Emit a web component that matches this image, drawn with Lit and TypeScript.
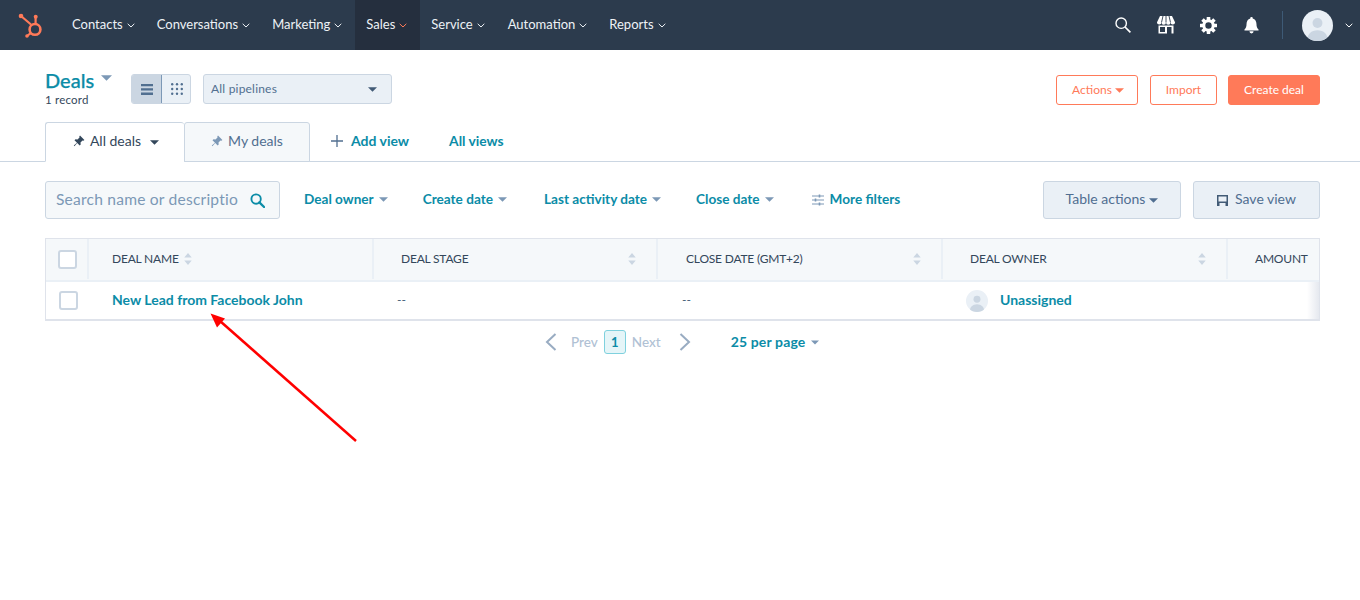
import { LitElement, html, css, svg } from "lit";
import { customElement } from "lit/decorators.js";

const caret = (cls = "") => html`<svg class="caret ${cls}" viewBox="0 0 10 5" width="9" height="5"><path d="M0 0h10L5 5z" fill="currentColor"/></svg>`;
const chev = (cls = "") => html`<svg class="chev ${cls}" viewBox="0 0 8 5" width="8" height="5"><path d="M.7.8 4 4l3.300-3.200" fill="none" stroke="currentColor" stroke-width="1"/></svg>`;
const pin = html`<svg class="pin" viewBox="0 0 12 12" width="12" height="12"><path d="M7 .6l4.400 4.300-1 .8-.9-.2-2 2 .2 2-1 1L4.200 8 1.400 11.200.8 10.600 4 7.800 1.500 5.300l1-1 2 .2 2-2-.2-1z" fill="currentColor"/></svg>`;
const sort = html`<svg class="sort" viewBox="0 0 8 15" width="8" height="14"><path d="M4 1l4 5H0zM4 14l4-5H0z" fill="#cbd6e2"/></svg>`;

const gear = () => {
  const teeth = [0, 45, 90, 135, 180, 225, 270, 315];
  return svg`${teeth.map((a) => svg`<rect x="6.700" y="0" width="3.600" height="4" rx=".4" fill="#fff" transform="rotate(${a} 8.500 8.500)"/>`)}
    <circle cx="8.500" cy="8.500" r="4.700" fill="none" stroke="#fff" stroke-width="3"/>`;
};

@customElement("app-root")
export class AppRoot extends LitElement {
  static styles = css`
    :host { display: block; width: 1360px; height: 600px; position: relative; overflow: hidden; background: #fff; font-family: "Lato", "Noto Sans", sans-serif; color: #33475b; font-size: 14px; --teal: #0b8ca7; }
    svg { display: block; flex: none; }
    .nav { height: 50px; background: #2c3b4d; color: #fff; display: flex; align-items: center; }
    .logo { width: 55px; margin-right: 17px; }
    .nitem { display: flex; align-items: center; height: 100%; gap: 4px; font-size: 13px; color: #eef2f6; padding: 0 11.500px 2px; box-sizing: border-box; }
    .nitem.first { padding-left: 0; padding-right: 10.500px; }
    .nitem.conv { padding-right: 10.500px; }
    .nitem.mkt { padding-right: 12.500px; }
    .nitem.on { background: #252f3e; padding-right: 12.500px; }
    .nitem.auto { padding-right: 10.500px; }
    .nitem.on .chev { color: #ff7a59; }
    .nitem .chev { margin-top: 2px; }
    .nright { margin-left: auto; display: flex; align-items: center; height: 100%; padding-right: 7px; }
    .nright .sep { width: 1px; height: 28px; background: #3e5a76; margin: 0 19px 0 23px; }
    .ic { margin-right: 25px; }
    .ic.g { margin-right: 27px; }
    .avatar { margin-right: 12px; }

    .head { display: flex; align-items: flex-start; height: 72px; padding: 0 40px 0 45px; }
    .title { width: 86px; padding-top: 18px; }
    .deals { display: flex; align-items: center; gap: 7px; color: var(--teal); font-size: 20px; font-weight: 500; line-height: 24px; height: 24px; -webkit-text-stroke: .25px var(--teal); }
    .deals .caret { color: #7c98b6; margin-top: -4px; width: 11px; height: 6px; }
    .rec { font-size: 11.500px; line-height: 14px; margin-top: 1px; letter-spacing: .2px; }
    .toggle { display: flex; width: 60px; height: 30px; margin-top: 24px; border: 1px solid #cbd6e2; border-radius: 3px; box-sizing: border-box; background: #eaf0f6; overflow: hidden; }
    .toggle div { flex: 1; display: flex; align-items: center; justify-content: center; padding-left: 1px; }
    .toggle .act { background: #cbd6e2; border-right: 1px solid #7c98b6; flex: none; width: 30px; box-sizing: border-box; padding-left: 0; }
    .select { width: 189px; height: 30px; margin: 24px 0 0 12px; box-sizing: border-box; background: #eaf0f6; border: 1px solid #cbd6e2; border-radius: 3px; display: flex; align-items: center; justify-content: space-between; padding: 0 14px 2px 7px; font-size: 12px; color: #516f90; letter-spacing: .2px; }
    .select .caret { color: #425b76; margin-top: 2px; }
    .acts { margin-left: auto; display: flex; gap: 12px; margin-top: 25px; }
    .btn { height: 30px; box-sizing: border-box; display: flex; align-items: center; justify-content: center; gap: 3px; border: 1px solid #ff7a59; border-radius: 3px; color: #ff7a59; font-size: 12px; padding-bottom: 2px; }
    .btn .caret { margin-top: 2px; }
    .btn.a { width: 82px; padding-left: 2px; } .btn.i { width: 67px; margin-right: -1px; } .btn.c { width: 92px; background: #ff7a59; color: #fff; }

    .tabs { display: flex; height: 40px; box-sizing: border-box; padding-left: 45px; border-bottom: 1px solid #cbd6e2; }
    .tab { height: 40px; box-sizing: border-box; display: flex; align-items: center; justify-content: center; gap: 5px; border: 1px solid #cbd6e2; border-radius: 3px 3px 0 0; font-size: 14px; padding-bottom: 3px; }
    .tab.one { width: 139px; background: #fff; border-bottom-color: #fff; border-right: 0; padding-left: 2px; }
    .tab.two { width: 126px; background: #f5f8fa; color: #516f90; }
    .tab.two .pin { color: #7c98b6; }
    .tab .caret { margin-left: 4px; margin-top: 3px; }
    .tab .pin { margin-top: 1px; }
    .tlink { color: var(--teal); font-weight: 700; font-size: 14px; display: flex; align-items: center; height: 38px; gap: 8px; padding-bottom: 2px; box-sizing: border-box; }
    .tlink svg { margin-top: 2px; }
    .tlink.add { margin-left: 21px; }
    .tlink.all { margin-left: 40px; font-size: 13.800px; }

    .filters { display: flex; align-items: center; height: 38px; margin-top: 19px; padding: 0 40px 0 45px; }
    .search { width: 235px; height: 38px; box-sizing: border-box; border: 1px solid #cbd6e2; border-radius: 3px; background: #f5f8fa; display: flex; align-items: center; justify-content: space-between; padding: 0 14px 2px 10px; color: #7c98b6; font-size: 15.600px; letter-spacing: .2px; white-space: nowrap; }
    .search svg { margin-top: 2px; }
    .f { display: flex; align-items: center; gap: 5px; color: var(--teal); font-weight: 700; font-size: 13.600px; padding-bottom: 3px; }
    .f .caret { color: #7c98b6; width: 9px; margin-top: 2px; }
    .f svg { margin-top: 2px; }
    .f1 { margin-left: 24px; } .f2, .f4 { margin-left: 35px; } .f3 { margin-left: 37px; } .f5 { margin-left: 38px; gap: 6px; }
    .gbtn { height: 38px; box-sizing: border-box; background: #eaf0f6; border: 1px solid #cbd6e2; border-radius: 3px; display: flex; align-items: center; justify-content: center; gap: 7px; color: #506e91; font-size: 14px; padding-bottom: 3px; }
    .gbtn svg { margin-top: 3px; }
    .gbtn.t { width: 138px; margin-left: auto; gap: 4px; } .gbtn.s { width: 127px; margin-left: 12px; }

    .table { margin: 19px 40px 0 45px; border: 1px solid #dfe3eb; border-bottom-width: 2px; height: 83px; box-sizing: border-box; position: relative; overflow: hidden; }
    .table::after { content: ""; position: absolute; right: 0; top: 43px; bottom: 0; width: 12px; background: linear-gradient(to right, rgba(223,227,235,0), rgba(223,227,235,.8)); }
    .tr { display: grid; grid-template-columns: 43px 285px 284px 285px 285px 1fr; }
    .tr.h { height: 43px; background: #f5f8fa; border-bottom: 2px solid #eaf0f6; box-sizing: border-box; }
    .th { display: flex; align-items: center; justify-content: space-between; padding: 0 20px 0 27px; font-size: 12px; color: #33475b; border-right: 2px solid #eaf0f6; box-sizing: border-box; letter-spacing: -.2px; height: 41px; margin-top: -1px; }
    .th.n1 { justify-content: flex-start; gap: 5px; padding-left: 23px; }
    .th.cd { padding-left: 28px; }
    .th.ck, .td.ck { padding: 0; justify-content: center; display: flex; align-items: center; }
    .th.am { border: 0; padding: 0 13px 0 27px; }
    .box { width: 19px; height: 19px; border: 2px solid #cbd6e2; border-radius: 3px; box-sizing: border-box; background: #fff; margin-left: 2px; }
    .th .box { margin-top: 2px; }
    .td { height: 37px; display: flex; align-items: center; padding: 0 0 2px 23px; font-size: 13px; box-sizing: border-box; }
    .td.dash { color: #425b76; font-size: 12px; }
    .td.dash.b { padding-left: 24px; }
    .link { color: var(--teal); font-weight: 700; font-size: 14px; }
    .owner { gap: 12px; }
    .owner svg { margin-top: 2px; }

    .pager { display: flex; align-items: center; height: 24px; margin: 9px 0 0 545px; font-size: 13.500px; color: #b0c1d4; font-weight: 500; }
    .pnum { width: 22px; height: 24px; box-sizing: border-box; background: #e5f5f8; border: 1px solid #7fd1de; border-radius: 3px; color: var(--teal); display: flex; align-items: center; justify-content: center; font-weight: 700; margin: 0 6px; font-size: 13px; }
    .per { color: var(--teal); font-weight: 700; display: flex; align-items: center; gap: 6px; margin-left: 40px; font-size: 14px; letter-spacing: .15px; padding-bottom: 1px; }
    .per .caret { color: #7c98b6; width: 8px; margin-top: 1px; }
    .pl { margin-right: 14px; } .pr { margin-left: 18px; }
    .arrow { position: absolute; left: 0; top: 0; pointer-events: none; }
  `;

  render() {
    return html`
      <div class="nav">
        <svg class="logo" viewBox="0 0 55 50" height="50">
          <g fill="none" stroke="#ff7a59" stroke-width="2.200">
            <path d="M21 16l10 8.500M35.600 17v6.500M27 36l4-3.200"/>
            <circle cx="35" cy="29.400" r="5.400" stroke-width="2.600"/>
          </g>
          <g fill="#ff7a59"><circle cx="21" cy="16" r="2.300"/><circle cx="35.700" cy="16.700" r="2"/><circle cx="27" cy="36" r="1.800"/></g>
        </svg>
        <div class="nitem first">Contacts${chev()}</div>
        <div class="nitem conv">Conversations${chev()}</div>
        <div class="nitem mkt">Marketing${chev()}</div>
        <div class="nitem on">Sales${chev()}</div>
        <div class="nitem">Service${chev()}</div>
        <div class="nitem auto">Automation${chev()}</div>
        <div class="nitem">Reports${chev()}</div>
        <div class="nright">
          <svg class="ic" viewBox="0 0 18 18" width="18" height="18"><circle cx="7.200" cy="7.200" r="5.200" fill="none" stroke="#fff" stroke-width="1.400"/><path d="M11 11l5.400 5.400" stroke="#fff" stroke-width="1.700"/></svg>
          <svg class="ic" viewBox="0 0 18 18" width="18" height="18"><path d="M3 0h12l3 6.200a2.200 2.200 0 0 1-4.500.3 2.200 2.200 0 0 1-4.500 0 2.200 2.200 0 0 1-4.500 0A2.200 2.200 0 0 1 0 6.200z" fill="#fff"/><path d="M6 0l-1.500 6.500M9 0v6.500M12 0l1.500 6.500" stroke="#2c3b4d" stroke-width=".9"/><path d="M1.500 9.500h15V17.500h-15zM3 11v5h5v-5zM10 11v6.500h4.500V11z" fill="#fff" fill-rule="evenodd"/></svg>
          <svg class="ic g" viewBox="0 0 17 17" width="17" height="17">${gear()}</svg>
          <svg viewBox="0 0 16 18" width="15" height="17"><path fill="#fff" d="M8 0a1.300 1.300 0 0 1 1.300 1.500C12 2.200 13.300 4.500 13.300 7.500c0 3 .7 4.500 2.200 5.800v.9H.5v-.9C2 12 2.700 10.500 2.700 7.500c0-3 1.300-5.300 4-6A1.300 1.300 0 0 1 8 0zM5.800 15.200h4.400a2.200 2.200 0 0 1-4.400 0z"/></svg>
          <div class="sep"></div>
          <svg class="avatar" viewBox="0 0 30 30" width="31" height="31"><defs><clipPath id="av"><circle cx="15" cy="15" r="15"/></clipPath></defs><circle cx="15" cy="15" r="15" fill="#eaf0f6"/><g clip-path="url(#av)" fill="#cbd6e2"><circle cx="15" cy="12.500" r="4.800"/><path d="M5 30c0-7 4-10.500 10-10.500S25 23 25 30z"/></g></svg>
          ${chev()}
        </div>
      </div>

      <div class="head">
        <div class="title">
          <div class="deals">Deals ${caret()}</div>
          <div class="rec">1 record</div>
        </div>
        <div class="toggle">
          <div class="act"><svg viewBox="0 0 12 11" width="12" height="11"><path d="M0 0h12v2.300H0zM0 4.300h12v2.300H0zM0 8.600h12V11H0z" fill="#516f90"/></svg></div>
          <div><svg viewBox="0 0 12 12" width="12" height="12" fill="#516f90">${[1.2, 6, 10.8].map((y) => [1.2, 6, 10.8].map((x) => svg`<circle cx=${x} cy=${y} r="1.200"/>`))}</svg></div>
        </div>
        <div class="select">All pipelines ${caret()}</div>
        <div class="acts">
          <div class="btn a">Actions ${caret()}</div>
          <div class="btn i">Import</div>
          <div class="btn c">Create deal</div>
        </div>
      </div>

      <div class="tabs">
        <div class="tab one">${pin}All deals ${caret()}</div>
        <div class="tab two">${pin}My deals</div>
        <div class="tlink add"><svg viewBox="0 0 12 12" width="12" height="12"><path d="M6 0v12M0 6h12" stroke="#516f90" stroke-width="1.300"/></svg>Add view</div>
        <div class="tlink all">All views</div>
      </div>

      <div class="filters">
        <div class="search">Search name or descriptio
          <svg viewBox="0 0 16 16" width="15" height="15"><circle cx="6.500" cy="6.500" r="5" fill="none" stroke="#0b8ca7" stroke-width="2"/><path d="M10 10l5 5" stroke="#0b8ca7" stroke-width="2.400" stroke-linecap="round"/></svg>
        </div>
        <div class="f f1">Deal owner ${caret()}</div>
        <div class="f f2">Create date ${caret()}</div>
        <div class="f f3">Last activity date ${caret()}</div>
        <div class="f f4">Close date ${caret()}</div>
        <div class="f f5"><svg viewBox="0 0 12 12" width="12" height="12"><path d="M0 2h12M0 6h12M0 10h12" stroke="#7c98b6" stroke-width="1"/><path d="M7.500.5v3M3.500 4.500v3M7.500 8.500v3" stroke="#7c98b6" stroke-width="1.600"/></svg>More filters</div>
        <div class="gbtn t">Table actions ${caret()}</div>
        <div class="gbtn s"><svg viewBox="0 0 11 11" width="11" height="11"><path fill="#425b76" fill-rule="evenodd" d="M0 0h11v11H0zM1.500 1.500v5h8v-5zM2.500 8v3h6V8z"/></svg>Save view</div>
      </div>

      <div class="table">
        <div class="tr h">
          <div class="th ck"><div class="box"></div></div>
          <div class="th n1">DEAL NAME ${sort}</div>
          <div class="th">DEAL STAGE ${sort}</div>
          <div class="th cd">CLOSE DATE (GMT+2) ${sort}</div>
          <div class="th">DEAL OWNER ${sort}</div>
          <div class="th am">AMOUNT</div>
        </div>
        <div class="tr">
          <div class="td ck"><div class="box"></div></div>
          <div class="td"><span class="link">New Lead from Facebook John</span></div>
          <div class="td dash">--</div>
          <div class="td dash b">--</div>
          <div class="td owner">
            <svg viewBox="0 0 24 24" width="22" height="22"><defs><clipPath id="ow"><circle cx="12" cy="12" r="12"/></clipPath></defs><circle cx="12" cy="12" r="12" fill="#eaf0f6"/><g clip-path="url(#ow)" fill="#cbd6e2"><circle cx="12" cy="10" r="3.800"/><path d="M4 24c0-5.500 3.200-8.500 8-8.500s8 3 8 8.500z"/></g></svg>
            <span class="link">Unassigned</span>
          </div>
          <div class="td"></div>
        </div>
      </div>

      <div class="pager">
        <svg class="pl" viewBox="0 0 12 18" width="12" height="18"><path d="M10.500 1L2 9l8.500 8" fill="none" stroke="#99acc2" stroke-width="2"/></svg>
        Prev
        <div class="pnum">1</div>
        Next
        <svg class="pr" viewBox="0 0 12 18" width="12" height="18"><path d="M1.500 1L10 9l-8.500 8" fill="none" stroke="#99acc2" stroke-width="2"/></svg>
        <div class="per">25 per page ${caret()}</div>
      </div>

      <svg class="arrow" width="1360" height="600" viewBox="0 0 1360 600">
        <path d="M356 441L220 321" stroke="#ff0000" stroke-width="2.500"/>
        <path d="M210.500 313.500L225 318.500 217 327.500z" fill="#ff0000"/>
      </svg>
    `;
  }
}
